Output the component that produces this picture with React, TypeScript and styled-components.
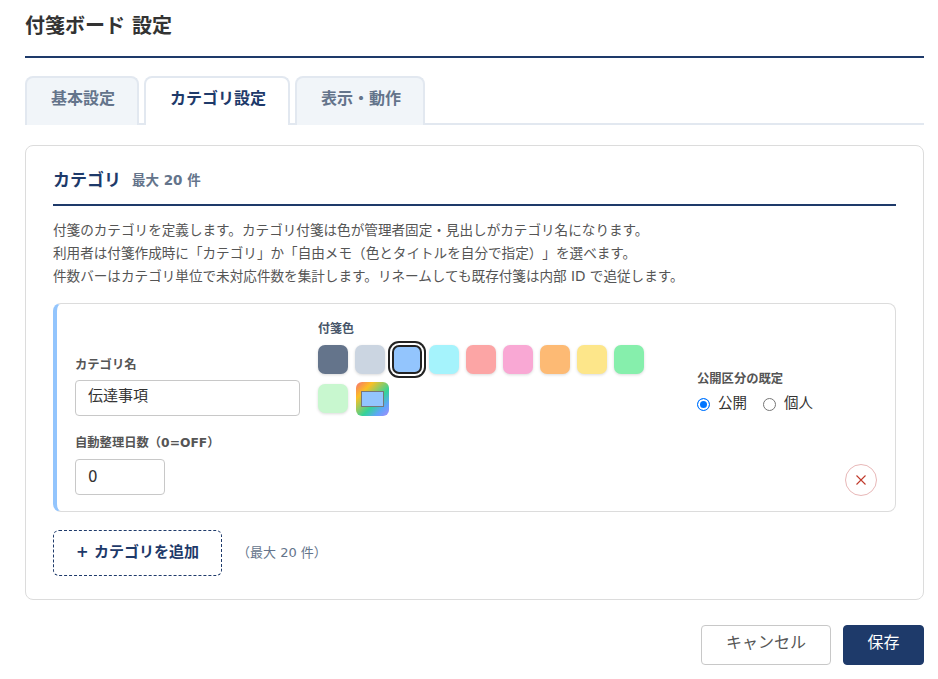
import React from "react";
import styled, { createGlobalStyle } from "styled-components";

const Global = createGlobalStyle`
  html, body { margin: 0; padding: 0; background: #fff; }
  body { font-family: "DejaVu Sans", "Noto Sans CJK JP", sans-serif; color: #333; text-spacing-trim: space-all; }
  * { box-sizing: border-box; }
`;

const Page = styled.div`
  width: 938px;
  height: 679px;
  padding: 0 14px 0 25px;
  overflow: hidden;
`;
const Header = styled.header`
  height: 58px;
  border-bottom: 2px solid #1e3a6a;
  padding-top: 13px;
`;
const Title = styled.h1`
  margin: 0;
  font-size: 20px;
  line-height: 27px;
  font-weight: 700;
  color: #333;
`;
const TabBar = styled.div`
  display: flex;
  gap: 5px;
  margin-top: 18px;
  height: 49px;
  border-bottom: 2px solid #e2e8f0;
`;
const Tab = styled.div<{ $active?: boolean }>`
  height: 49px;
  padding: 0 22px 5px 24px;
  display: flex;
  align-items: center;
  font-size: 16px;
  line-height: 24px;
  font-weight: 700;
  border: 2px solid #e2e8f0;
  border-bottom: none;
  border-radius: 8px 8px 0 0;
  color: ${(p) => (p.$active ? "#1e3a6a" : "#64748b")};
  background: ${(p) => (p.$active ? "#fff" : "#f1f5f9")};
`;
const Panel = styled.section`
  margin-top: 20px;
  height: 455px;
  border: 1px solid #dcdcdc;
  border-radius: 8px;
  padding: 20px 27px 0;
`;
const PanelHead = styled.div`
  display: flex;
  align-items: baseline;
  gap: 11px;
  height: 40px;
  border-bottom: 2px solid #1e3a6a;
`;
const PanelTitle = styled.h2`
  margin: 0;
  font-size: 17px;
  line-height: 28px;
  font-weight: 700;
  color: #1e3a6a;
`;
const PanelHint = styled.span`
  font-size: 13.5px;
  line-height: 24px;
  font-weight: 700;
  color: #64748b;
  position: relative;
  top: -1px;
`;
const Desc = styled.p`
  margin: 13px 0 0;
  font-size: 13.6px;
  line-height: 23px;
  color: #555;
`;
const Card = styled.div`
  margin-top: 15px;
  height: 209px;
  border: 1px solid #dcdcdc;
  border-left: 4px solid #93c5fd;
  border-radius: 8px;
  padding: 0 18px;
  display: grid;
  grid-template-columns: 225px 361px 1fr;
  column-gap: 18px;
  position: relative;
`;
const LeftCol = styled.div`
  display: flex;
  flex-direction: column;
  padding-top: 52px;
`;
const FieldLabel = styled.label`
  display: block;
  font-size: 12.3px;
  line-height: 18px;
  font-weight: 700;
  color: #555;
`;
const TextInput = styled.div<{ $w: number; $lh: number }>`
  width: ${(p) => p.$w}px;
  height: 36px;
  margin-top: 6px;
  border: 1px solid #c8c8c8;
  border-radius: 4px;
  padding: 0 12px;
  font-size: 15px;
  line-height: ${(p) => p.$lh}px;
  color: #333;
  margin-bottom: 18px;
`;
const NumberInput = styled(TextInput)`
  margin-top: 7px;
`;
const ColorCol = styled.div`
  padding-top: 16px;
`;
const ColorLabel = styled(FieldLabel)`
  color: #475569;
  font-size: 12px;
`;
const Swatches = styled.div`
  display: flex;
  flex-wrap: wrap;
  column-gap: 7px;
  row-gap: 10px;
  margin-top: 7px;
  width: 340px;
  align-items: flex-start;
`;
const Swatch = styled.div<{ $c: string; $selected?: boolean }>`
  width: 30px;
  height: 29px;
  border-radius: 7px;
  background: ${(p) => p.$c};
  box-shadow: ${(p) =>
    p.$selected
      ? "0 0 0 2px #fff, 0 0 0 4px #222"
      : "0 1px 3px rgba(0,0,0,.15)"};
  ${(p) => p.$selected && "border: 2px solid #222;"}
`;
const CustomSwatch = styled.div`
  width: 33px;
  height: 34px;
  margin: -2px 0 0 1px;
  border-radius: 6px;
  background: linear-gradient(135deg, #f87171, #fbbf24 25%, #34d399 60%, #60a5fa 80%, #a78bfa);
  display: flex;
  align-items: center;
  justify-content: center;
`;
const CustomInner = styled.div`
  width: 23px;
  height: 16px;
  background: #93c5fd;
  border: 1px solid #777;
`;
const RightCol = styled.div`
  padding-top: 66px;
`;
const RadioRow = styled.div`
  display: flex;
  align-items: center;
  margin-top: 6px;
  font-size: 14.5px;
  line-height: 20px;
  color: #333;
`;
const RadioDot = styled.span<{ $on?: boolean }>`
  width: 13px;
  height: 13px;
  border-radius: 50%;
  margin-right: 8px;
  border: ${(p) => (p.$on ? "1px solid #0075ff" : "1px solid #767676")};
  background: ${(p) => (p.$on ? "#0075ff" : "#fff")};
  box-shadow: ${(p) => (p.$on ? "inset 0 0 0 2px #fff" : "none")};
`;
const RadioText = styled.span`
  margin-right: 16px;
  position: relative;
  top: -1px;
`;
const RemoveBtn = styled.div`
  position: absolute;
  right: 18px;
  bottom: 15px;
  width: 32px;
  height: 32px;
  border-radius: 50%;
  border: 1px solid #e8b8b8;
  display: flex;
  align-items: center;
  justify-content: center;
`;
const AddRow = styled.div`
  display: flex;
  align-items: center;
  gap: 15px;
  margin-top: 18px;
`;
const AddBtn = styled.div`
  width: 169px;
  height: 46px;
  border: 1px dashed #1e3a6a;
  border-radius: 6px;
  display: flex;
  align-items: center;
  justify-content: center;
  padding-bottom: 3px;
  font-size: 15px;
  line-height: 22px;
  font-weight: 700;
  color: #1e3a6a;
`;
const AddHint = styled.span`
  font-size: 13px;
  line-height: 20px;
  color: #64748b;
`;
const Footer = styled.div`
  display: flex;
  justify-content: flex-end;
  gap: 12px;
  margin-top: 25px;
`;
const Button = styled.div<{ $primary?: boolean }>`
  width: ${(p) => (p.$primary ? 81 : 130)}px;
  height: 40px;
  border-radius: 4px;
  display: flex;
  align-items: center;
  justify-content: center;
  padding-bottom: 4px;
  font-size: 16px;
  line-height: 24px;
  border: 1px solid ${(p) => (p.$primary ? "#1e3a6a" : "#c8c8c8")};
  background: ${(p) => (p.$primary ? "#1e3a6a" : "#fff")};
  color: ${(p) => (p.$primary ? "#fff" : "#555")};
`;

const colors = ["#64748b", "#cbd5e1", "#93c5fd", "#a5f3fc", "#fca5a5", "#f9a8d4", "#fdba74", "#fde68a", "#86efac", "#c8f7cf"];

export default function App() {
  return (
    <Page>
      <Global />
      <Header>
        <Title>付箋ボード 設定</Title>
      </Header>
      <TabBar>
        <Tab>基本設定</Tab>
        <Tab $active>カテゴリ設定</Tab>
        <Tab>表示・動作</Tab>
      </TabBar>
      <Panel>
        <PanelHead>
          <PanelTitle>カテゴリ</PanelTitle>
          <PanelHint>最大 20 件</PanelHint>
        </PanelHead>
        <Desc>
          付箋のカテゴリを定義します。カテゴリ付箋は色が管理者固定・見出しがカテゴリ名になります。
          <br />
          利用者は付箋作成時に「カテゴリ」か「自由メモ（色とタイトルを自分で指定）」を選べます。
          <br />
          件数バーはカテゴリ単位で未対応件数を集計します。リネームしても既存付箋は内部 ID で追従します。
        </Desc>
        <Card>
          <LeftCol>
            <FieldLabel>カテゴリ名</FieldLabel>
            <TextInput $w={225} $lh={30}>伝達事項</TextInput>
            <FieldLabel>自動整理日数（0=OFF）</FieldLabel>
            <NumberInput $w={90} $lh={34}>0</NumberInput>
          </LeftCol>
          <ColorCol>
            <ColorLabel>付箋色</ColorLabel>
            <Swatches>
              {colors.map((c, i) => (
                <Swatch key={c} $c={c} $selected={i === 2} />
              ))}
              <CustomSwatch>
                <CustomInner />
              </CustomSwatch>
            </Swatches>
          </ColorCol>
          <RightCol>
            <FieldLabel>公開区分の既定</FieldLabel>
            <RadioRow>
              <RadioDot $on />
              <RadioText>公開</RadioText>
              <RadioDot />
              <RadioText>個人</RadioText>
            </RadioRow>
          </RightCol>
          <RemoveBtn>
            <svg width="12" height="12" viewBox="0 0 12 12" fill="none" stroke="#c0392b" strokeWidth="1.1">
              <path d="M1.5 1.5l9 9M10.5 1.5l-9 9" />
            </svg>
          </RemoveBtn>
        </Card>
        <AddRow>
          <AddBtn>+ カテゴリを追加</AddBtn>
          <AddHint>（最大 20 件）</AddHint>
        </AddRow>
      </Panel>
      <Footer>
        <Button>キャンセル</Button>
        <Button $primary>保存</Button>
      </Footer>
    </Page>
  );
}
